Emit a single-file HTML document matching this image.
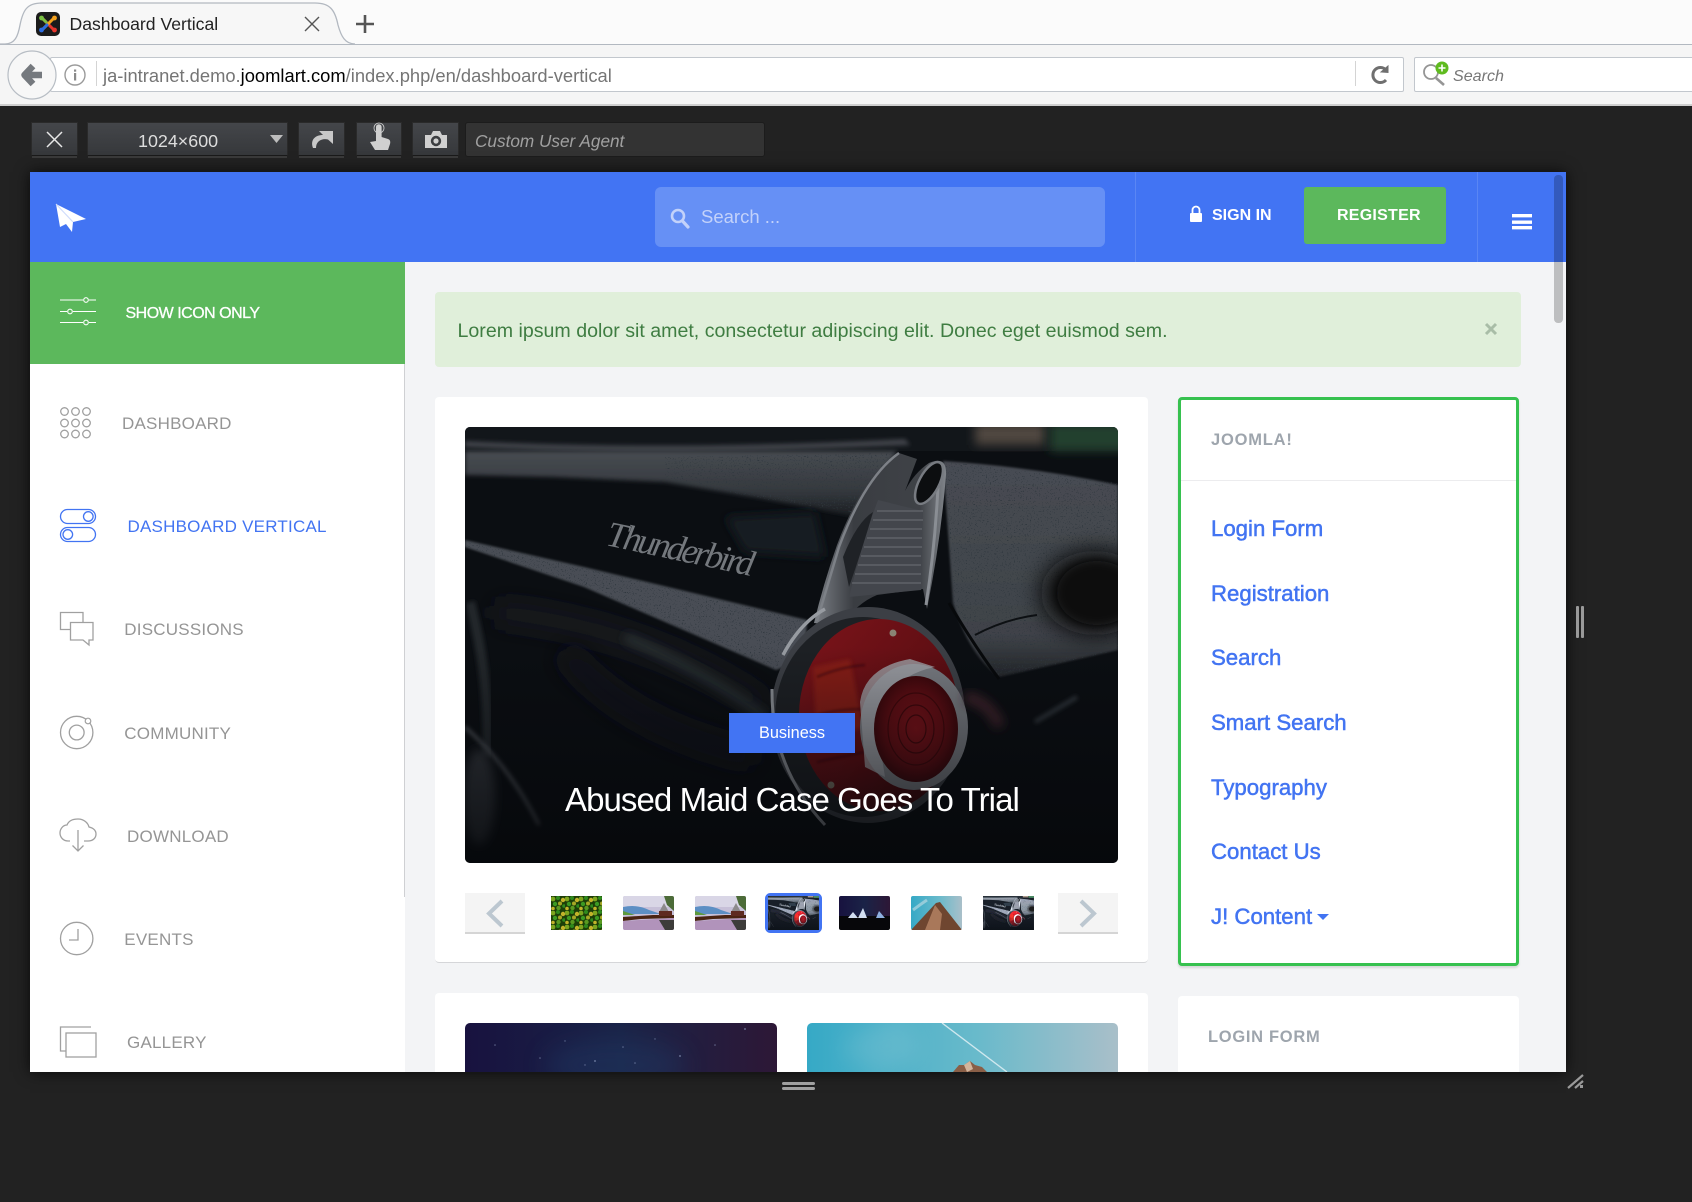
<!DOCTYPE html>
<html lang="en">
<head>
<meta charset="utf-8">
<title>Dashboard Vertical</title>
<style>
html,body{margin:0;padding:0;width:1692px;height:1202px;overflow:hidden;background:#222}
body{font-family:"Liberation Sans",Arial,sans-serif;position:relative}
.b{position:absolute;box-sizing:border-box}
.t{position:absolute;white-space:nowrap;line-height:24px;height:24px}
.nav{font-size:17px;letter-spacing:.22px;color:#959595}
.mi{font-size:22.2px;color:#4274f2;left:1211px;-webkit-text-stroke:.5px #4274f2}
.btn{background:linear-gradient(#44464a,#36383b);border:1px solid #2a2a2a;border-bottom:1px solid #1a1a1a;box-shadow:0 3px 0 -1px #3a3a3a}
svg{position:absolute;left:0;top:0}
</style>
</head>
<body>
<!-- browser chrome -->
<div class="b" style="left:0;top:0;width:1692px;height:45px;background:#fbfbfb;border-bottom:1px solid #b2b8c0"></div>
<div class="b" style="left:0;top:45px;width:1692px;height:61px;background:#f5f5f5;border-bottom:2px solid #cfcfcf"></div>
<div class="b" style="left:50px;top:57px;width:1354px;height:35px;background:#fff;border:1px solid #c2c7cd;border-radius:2px"></div>
<div class="b" style="left:1414px;top:57px;width:290px;height:35px;background:#fff;border:1px solid #c2c7cd;border-radius:2px"></div>

<!-- device toolbar -->
<div class="b btn" style="left:31px;top:122px;width:47px;height:34px"></div>
<div class="b btn" style="left:87px;top:122px;width:201px;height:34px"></div>
<div class="b btn" style="left:298px;top:122px;width:47px;height:34px"></div>
<div class="b btn" style="left:356px;top:122px;width:46px;height:34px"></div>
<div class="b btn" style="left:412px;top:122px;width:47px;height:34px"></div>
<div class="b" style="left:465px;top:122px;width:300px;height:35px;background:#333;border:1px solid #1c1c1c;border-radius:3px"></div>

<!-- responsive frame -->
<div class="b" style="left:30px;top:172px;width:1536px;height:900px;background:#f3f4f6;box-shadow:0 0 14px rgba(0,0,0,.75)"></div>
<div class="b" style="left:30px;top:172px;width:1536px;height:90px;background:#4274f3"></div>
<div class="b" style="left:655px;top:187px;width:450px;height:60px;background:#6690f5;border-radius:6px"></div>
<div class="b" style="left:1135px;top:172px;width:1px;height:90px;background:#5a86f4"></div>
<div class="b" style="left:1477px;top:172px;width:1px;height:90px;background:#5a86f4"></div>
<div class="b" style="left:1304px;top:187px;width:142px;height:57px;background:#5cb85c;border-radius:3px"></div>

<!-- sidebar -->
<div class="b" style="left:30px;top:262px;width:375px;height:810px;background:#fff"></div>
<div class="b" style="left:404px;top:262px;width:1px;height:635px;background:#cfd0d3"></div>
<div class="b" style="left:30px;top:262px;width:375px;height:102px;background:#5cb85c"></div>

<!-- main -->
<div class="b" style="left:435px;top:292px;width:1086px;height:75px;background:#e0efda;border-radius:4px"></div>
<div class="b" style="left:435px;top:397px;width:713px;height:566px;background:#fff;border-radius:4px;border-bottom:1px solid #d5d6d9"></div>
<div class="b" style="left:435px;top:993px;width:713px;height:79px;background:#fff;border-radius:4px 4px 0 0"></div>
<div class="b" style="left:1178px;top:397px;width:341px;height:569px;background:#fff;border:3px solid #36c14f;border-radius:4px;box-shadow:0 2px 2px rgba(0,0,0,.12)"></div>
<div class="b" style="left:1181px;top:480px;width:335px;height:1px;background:#ececee"></div>
<div class="b" style="left:1178px;top:996px;width:341px;height:76px;background:#fff;border-radius:4px 4px 0 0"></div>
<div class="b" style="left:465px;top:893px;width:60px;height:41px;background:#f4f4f4;border-bottom:2px solid #d5d5d5"></div>
<div class="b" style="left:1058px;top:893px;width:60px;height:41px;background:#f4f4f4;border-bottom:2px solid #d5d5d5"></div>

<svg width="1692" height="1202" viewBox="0 0 1692 1202" xmlns="http://www.w3.org/2000/svg">
<defs>
  <filter id="b1" x="-20%" y="-20%" width="140%" height="140%"><feGaussianBlur stdDeviation="1"/></filter>
  <filter id="b2" x="-20%" y="-20%" width="140%" height="140%"><feGaussianBlur stdDeviation="2"/></filter>
  <filter id="b5" x="-30%" y="-30%" width="160%" height="160%"><feGaussianBlur stdDeviation="5"/></filter>
  <filter id="b12" x="-50%" y="-50%" width="200%" height="200%"><feGaussianBlur stdDeviation="12"/></filter>
  <filter id="speck" x="0" y="0" width="100%" height="100%">
    <feTurbulence type="fractalNoise" baseFrequency=".75" numOctaves="2" seed="4"/>
    <feColorMatrix values="0 0 0 0 .03  0 0 0 0 .04  0 0 0 0 .05  14 0 0 0 -8.9"/>
  </filter>
  <clipPath id="grainC"><path d="M0 113 L119 140 L342 193 L311 243 L119 160 L0 120Z M200 30 L432 26 L392 86 L300 72 L200 52Z M478 34 L653 56 V223 L534 250 L488 176Z"/></clipPath>
  <clipPath id="r1"><rect x="0" y="0" width="653" height="436" rx="5"/></clipPath>
  <clipPath id="rt"><rect x="0" y="0" width="51" height="34" rx="2"/></clipPath>
  <radialGradient id="lens" cx=".5" cy=".5" r=".55"><stop offset="0" stop-color="#7a1219"/><stop offset=".6" stop-color="#5f0d13"/><stop offset="1" stop-color="#33060a"/></radialGradient>
  <linearGradient id="lamp" x1="0" y1="0" x2="1" y2="1"><stop offset="0" stop-color="#7d141a"/><stop offset=".55" stop-color="#5e0e13"/><stop offset="1" stop-color="#300609"/></linearGradient>
  <linearGradient id="body" x1="0" y1="0" x2="0" y2="1"><stop offset="0" stop-color="#484c53"/><stop offset=".8" stop-color="#3f4349"/><stop offset="1" stop-color="#24272b"/></linearGradient>
  <linearGradient id="deck" x1="0" y1="0" x2="0" y2="1"><stop offset="0" stop-color="#484c52"/><stop offset=".6" stop-color="#35393e"/><stop offset="1" stop-color="#1a1d21"/></linearGradient>
  <linearGradient id="fin" x1="0" y1="0" x2="1" y2="0"><stop offset="0" stop-color="#7c8086"/><stop offset=".3" stop-color="#3a3d42"/><stop offset=".8" stop-color="#3f4247"/><stop offset="1" stop-color="#80848a"/></linearGradient>
  <linearGradient id="fade" x1="0" y1="0" x2="0" y2="1"><stop offset="0" stop-color="#05070a" stop-opacity="0"/><stop offset="1" stop-color="#05070a" stop-opacity=".78"/></linearGradient>
  <linearGradient id="sky" x1="0" y1="0" x2="1" y2="0"><stop offset="0" stop-color="#36a9c6"/><stop offset=".55" stop-color="#69bacb"/><stop offset="1" stop-color="#a9bfc9"/></linearGradient>
  <linearGradient id="night" x1="0" y1="0" x2="1" y2="0"><stop offset="0" stop-color="#18123f"/><stop offset=".5" stop-color="#1a2347"/><stop offset="1" stop-color="#2d1736"/></linearGradient>
  <pattern id="peas" width="14" height="14" patternUnits="userSpaceOnUse"><rect width="14" height="14" fill="#1d3f08"/><circle cx="2" cy="3" r="2.4" fill="#7ea61f"/><circle cx="7" cy="2" r="2" fill="#2f8a1c"/><circle cx="12" cy="4" r="2.2" fill="#c2b32a"/><circle cx="4" cy="8" r="2.2" fill="#3c9a22"/><circle cx="9" cy="7.5" r="2" fill="#a6a825"/><circle cx="13" cy="10" r="1.8" fill="#2f8a1c"/><circle cx="2" cy="12.5" r="1.8" fill="#c2b32a"/><circle cx="7.5" cy="12" r="2.2" fill="#5a9a20"/></pattern>

  <g id="car">
    <rect width="653" height="436" fill="#0b0e12"/>
    <!-- background at top right -->
    <rect x="0" y="0" width="653" height="24" fill="#12161a"/>
    <rect x="510" y="-4" width="70" height="22" fill="#4f463f" filter="url(#b5)"/>
    <rect x="585" y="-4" width="80" height="28" fill="#20402f" filter="url(#b5)"/>
    <path d="M0 14 Q200 24 440 12 L445 18 Q200 30 0 20Z" fill="#3f4349" filter="url(#b2)"/>
    <!-- top deck -->
    <path d="M0 24 L432 24 L392 90 L300 72 L200 55 L90 50 L0 48Z" fill="url(#deck)" filter="url(#b2)"/>
    <path d="M260 90 L350 85 L360 130 L280 125Z" fill="#141e24" filter="url(#b5)"/>
    <!-- side band -->
    <path d="M0 113 L119 140 L342 193 L340 232 L311 243 L119 160 L0 120Z" fill="#4a4e54" filter="url(#b1)"/>
    <path d="M30 185 Q180 200 300 280" stroke="#1b1e23" stroke-width="18" fill="none" filter="url(#b12)"/>
    <path d="M160 210 Q240 245 300 290" stroke="#2c3035" stroke-width="8" fill="none" filter="url(#b5)"/>
    <path d="M100 225 Q160 300 290 330" stroke="#14171b" stroke-width="22" fill="none" filter="url(#b12)"/>
    <!-- right body -->
    <path d="M478 34 Q570 40 653 58 V223 L534 250 Q505 230 488 176Z" fill="url(#body)" filter="url(#b1)"/>
    <!-- grain -->
    <g clip-path="url(#grainC)"><rect width="653" height="260" filter="url(#speck)"/></g>
    <ellipse cx="630" cy="166" rx="54" ry="42" fill="#0c0e11" filter="url(#b12)"/>
    <ellipse cx="632" cy="166" rx="40" ry="32" fill="#0b0d10" filter="url(#b5)"/>
    <path d="M484 176 Q510 220 534 252" stroke="#07090b" stroke-width="3" fill="none"/>
    <path d="M510 208 Q540 192 572 188" stroke="#0d1013" stroke-width="2" fill="none"/>
    <!-- script badge -->
    <text x="140" y="118" transform="rotate(12 140 118)" font-family="Liberation Serif,serif" font-style="italic" font-size="36" fill="#74787d" textLength="150">Thunderbird</text>
    <!-- fin -->
    <path d="M434 26 Q398 48 372 118 Q358 158 349 196 L376 199 Q392 176 412 168 L458 162 L462 182 Q476 112 481 48 Q482 28 464 36 Q449 46 440 64 L452 32Z" fill="url(#fin)"/>
    <path d="M434 26 Q400 50 374 120 Q362 160 352 194" fill="none" stroke="#7d8187" stroke-width="2.5"/>
    <path d="M413 73 L458 84 L456 163 L384 170 Q398 112 413 73Z" fill="#43464c"/>
    <g stroke="#6d7076" stroke-width="1.1"><path d="M412 84H458M408 93H458M405 102H457M402 111H457M399 120H457M396 129H456M393 138H456M390 147H456M387 156H456"/></g>
    <path d="M378 130 Q392 95 408 85 Q398 120 384 160Z" fill="#1f2226"/>
    <path d="M473 60 Q470 120 461 178" fill="none" stroke="#8a8e94" stroke-width="3"/>
    <ellipse cx="464" cy="56" rx="10" ry="23" transform="rotate(28 464 56)" fill="#0c0e10" stroke="#777b81" stroke-width="2.5"/>
    <!-- lamp -->
    <ellipse cx="403" cy="288" rx="97" ry="108" fill="#3c3f45"/>
    <ellipse cx="398" cy="290" rx="88" ry="100" fill="#1d2024"/>
    <ellipse cx="414" cy="288" rx="80" ry="96" fill="url(#lamp)"/>
    <path d="M348 240 L385 232 L398 300 L352 320Z" fill="#8e2219" opacity=".7" filter="url(#b2)"/>
    <g stroke="#2c0507" stroke-width="2.5" fill="none" opacity=".45" filter="url(#b1)"><path d="M352 250 Q375 240 400 238 M345 290 Q370 282 398 282 M352 335 Q375 330 400 325"/></g>
    <ellipse cx="449" cy="300" rx="54" ry="63" fill="#777a80"/>
    <path d="M395 275 Q400 240 445 232 L470 240 Q420 250 412 300 L420 350 L400 340Z" fill="#9fa1a6" opacity=".8"/>
    <ellipse cx="451" cy="302" rx="42" ry="53" fill="url(#lens)"/>
    <g fill="none" stroke="#3f070b" stroke-width="1.2"><ellipse cx="451" cy="302" rx="10" ry="14"/><ellipse cx="451" cy="302" rx="18" ry="24"/><ellipse cx="451" cy="302" rx="28" ry="36"/></g>
    <circle cx="428" cy="206" r="3.5" fill="#8a8374"/>
    <circle cx="366" cy="358" r="3.5" fill="#7d7568"/>
    <path d="M307 262 Q306 340 360 398" fill="none" stroke="#8b8f95" stroke-width="3"/>
    <path d="M318 228 Q335 196 360 182" fill="none" stroke="#979ba1" stroke-width="3.5"/>
    <!-- lower left wheel arch -->
    <path d="M5 175 Q25 250 22 330" fill="none" stroke="#22252a" stroke-width="10" filter="url(#b2)"/>
    <path d="M0 300 Q45 340 74 398" fill="none" stroke="#55595f" stroke-width="3" filter="url(#b2)"/>
    <ellipse cx="14" cy="370" rx="16" ry="48" fill="#30343a" filter="url(#b5)"/>
    <path d="M500 270 Q525 275 535 300" stroke="#3d2329" stroke-width="12" fill="none" filter="url(#b5)"/>
    <path d="M570 295 L612 270" stroke="#33373c" stroke-width="4" filter="url(#b2)"/>
    <rect y="220" width="653" height="216" fill="url(#fade)"/>
  </g>

  <g id="lake" clip-path="url(#rt)">
    <rect width="51" height="34" fill="#c7c0d8"/>
    <rect width="51" height="11" fill="#d9d6e6"/>
    <path d="M0 11 Q14 8 26 14 L38 18 H0Z" fill="#5c8fc4"/>
    <path d="M0 15 L12 19 H0Z" fill="#5e9a3e"/>
    <path d="M0 21 L30 19 L51 19 V22 L18 23 L0 25Z" fill="#4a2412"/>
    <path d="M0 25 L51 22 V34 H0Z" fill="#b193bb"/>
    <path d="M35 18 L41 7 L47 18Z" fill="#8d8a8c"/>
    <rect x="36" y="15" width="13" height="5" fill="#5e2a20"/>
    <path d="M41 0 H51 V15 L44 9Z" fill="#4c6b38"/>
    <path d="M36 24 H51 V34 H42Z" fill="#3d3c3a"/>
  </g>
  <g id="tents" clip-path="url(#rt)">
    <rect width="51" height="20" fill="url(#night)"/>
    <rect y="20" width="51" height="14" fill="#07070a"/>
    <path d="M9 22 L14 16 L19 22Z M19 22 L24 12 L28 22Z" fill="#d3dff2"/>
    <path d="M37 22 L40 15 L46 22Z" fill="#8fb0e0"/>
  </g>
  <g id="tower" clip-path="url(#rt)">
    <rect width="51" height="34" fill="url(#sky)"/>
    <path d="M0 34 L25 7 L29 6 L51 34Z" fill="#6f4630"/>
    <path d="M24 9 L31 18 L29 34 H14Z" fill="#a9785a"/>
    <path d="M2 14 Q10 8 16 4" stroke="#c7dde5" stroke-width="3" fill="none" opacity=".6"/>
  </g>
</defs>

<!-- ===== browser tab ===== -->
<path d="M0 44 H5 C15 44 18 36 20 25 C23 10 27 3 42 3 H315 C330 3 335 10 338 25 C341 36 345 44 355 44" fill="#f7f7f7" stroke="#b2b8c0" stroke-width="1.3"/>
<rect x="36" y="12" width="24" height="24" rx="5" fill="#1b1b1b"/>
<g stroke-width="3" fill="none" stroke-linecap="round">
  <path d="M42 18 L54 30" stroke="#e8352c"/><path d="M54 18 L42 30" stroke="#f4a21e"/>
  <path d="M42 30 L47 25" stroke="#2c6ce0"/><path d="M42 18 L46 22" stroke="#7ac143"/>
</g>
<circle cx="41.5" cy="18" r="2.4" fill="#7ac143"/><circle cx="54.5" cy="18" r="2.4" fill="#f4a21e"/><circle cx="41.5" cy="30" r="2.4" fill="#2c6ce0"/><circle cx="54.5" cy="30" r="2.4" fill="#e8352c"/>
<path d="M305 17 L319 31 M319 17 L305 31" stroke="#555" stroke-width="1.4"/>
<path d="M365 15 V33 M356 24 H374" stroke="#555" stroke-width="2.6"/>
<!-- back button -->
<circle cx="32" cy="75" r="24" fill="#f7f7f7" stroke="#b7bdc4" stroke-width="1.2"/>
<path d="M33 66 L24.5 75 L33 84 M27 75 H42" fill="none" stroke="#75797e" stroke-width="6.5" stroke-linejoin="round"/>
<circle cx="75" cy="75" r="10" fill="none" stroke="#9a9a9a" stroke-width="1.4"/>
<rect x="74" y="73" width="2.2" height="7.5" fill="#8a8a8a"/><rect x="74" y="69.5" width="2.2" height="2.2" fill="#8a8a8a"/>
<rect x="96" y="61" width="1" height="25" fill="#d4d4d4"/>
<rect x="1355" y="61" width="1" height="25" fill="#d4d4d4"/>
<path d="M1386 70 A7.5 7.5 0 1 0 1386 80" fill="none" stroke="#6f6f6f" stroke-width="3"/>
<path d="M1381 72 L1388 66 V72.5Z" fill="#6f6f6f" stroke="#6f6f6f" stroke-width="1"/>
<circle cx="1431" cy="72" r="7" fill="none" stroke="#959595" stroke-width="1.8"/>
<path d="M1436 78 L1444 85" stroke="#959595" stroke-width="2.6"/>
<circle cx="1442" cy="68" r="6.5" fill="#5fbb1f"/>
<path d="M1442 64.5 V71.5 M1438.5 68 H1445.5" stroke="#fff" stroke-width="1.6"/>

<!-- ===== device toolbar icons ===== -->
<path d="M47 132 L62 147 M62 132 L47 147" stroke="#e8e8e8" stroke-width="1.5"/>
<path d="M270 135 H283 L276.5 143Z" fill="#bdbdbd"/>
<path d="M313 148 C310 140 315 135 323 135 L319 131 H333 V144 L328 139.5 C322 138 316 141 316 148Z" fill="#c8c8c8"/>
<path d="M376 127 a2.8 2.8 0 0 1 5.6 0 V137 L388 139 Q391 140 390 144 L388 150 H375 L370 142 L376 141Z" fill="#d0d0d0"/>
<circle cx="379" cy="128" r="5" fill="none" stroke="#d0d0d0" stroke-width=".8"/>
<path d="M425 135 H431 L433 131 H440 L442 135 H447 V148 H425Z" fill="#d0d0d0"/>
<circle cx="436" cy="141" r="5.2" fill="#3c3e41"/><circle cx="436" cy="141" r="2.6" fill="#d0d0d0"/>

<!-- ===== header ===== -->
<path d="M56 204 L86 219 L73 222 L72 232 L66 224 L60 227Z" fill="#fff"/>
<path d="M56 204 L73 222" stroke="#cfdcfb" stroke-width="1.2"/>
<circle cx="678" cy="216" r="6" fill="none" stroke="#c3d2fa" stroke-width="2.6"/>
<path d="M682.5 221 L688 227" stroke="#c3d2fa" stroke-width="3.2" stroke-linecap="round"/>
<path d="M1192.5 213 V210 a3.5 3.5 0 0 1 7 0 V213" fill="none" stroke="#fff" stroke-width="1.8"/>
<rect x="1190" y="213" width="12" height="9" rx="1" fill="#fff"/>
<path d="M1512 214 h20 v3.4 h-20z M1512 220.5 h20 v3.4 h-20z M1512 226 h20 v3.4 h-20z" fill="#fff"/>
<!-- scrollbar -->
<rect x="1554" y="175" width="9" height="148" rx="4" fill="#000" opacity=".22"/>

<!-- ===== sidebar icons ===== -->
<g fill="none" stroke="#fff" stroke-width="1.1">
  <path d="M60 300 H83 M89 300 H96 M60 311.5 H67 M73 311.5 H96 M60 322.5 H83 M89 322.5 H96"/>
  <circle cx="86" cy="300" r="2.3"/><circle cx="70" cy="311.5" r="2.3"/><circle cx="86" cy="322.5" r="2.3"/>
</g>
<g fill="none" stroke="#a0a0a0" stroke-width="1.3">
  <circle cx="64.5" cy="411.5" r="3.8"/><circle cx="75.5" cy="411.5" r="3.8"/><circle cx="86.5" cy="411.5" r="3.8"/>
  <circle cx="64.5" cy="423" r="3.8"/><circle cx="75.5" cy="423" r="3.8"/><circle cx="86.5" cy="423" r="3.8"/>
  <circle cx="64.5" cy="434" r="3.8"/><circle cx="75.5" cy="434" r="3.8"/><circle cx="86.5" cy="434" r="3.8"/>
  <path d="M83 622 V612.5 H60.5 V629.5 H70.5 M70.5 622.5 H93 V640 H89 V645 L83 640 H70.5Z"/>
  <circle cx="76.7" cy="732.5" r="16.2"/><circle cx="76.7" cy="732.5" r="7.4"/>
  <path d="M70 841 H68 C63 841 60 837 60 833 C60 829 63 825 67 825 C69 820 74 819 78 819 C84 819 88 823 89 827 C93 828 96 830 96 834 C96 838 93 841 88 841 H84"/>
  <path d="M78 830 V851 M72.5 845.5 L78 851 L83.5 845.5"/>
  <circle cx="76.7" cy="938.5" r="16.2"/><path d="M78 929 V940 H69"/>
  <path d="M91 1027 H60.5 V1051 H66"/><rect x="66" y="1033" width="30" height="24"/>
</g>
<circle cx="88" cy="721" r="2.8" fill="#fff" stroke="#a0a0a0" stroke-width="1.2"/>
<g fill="none" stroke="#4274f2" stroke-width="1.3">
  <rect x="60.5" y="509.5" width="35" height="14" rx="7"/><circle cx="88.3" cy="516.5" r="4.8"/>
  <rect x="60.5" y="527.5" width="35" height="14" rx="7"/><circle cx="67.8" cy="534.5" r="4.8"/>
</g>

<!-- alert close -->
<path d="M1486 324 L1496 334 M1496 324 L1486 334" stroke="#a9bda7" stroke-width="3"/>

<!-- ===== hero image ===== -->
<svg x="465" y="427" width="653" height="436" viewBox="0 0 653 436">
  <g clip-path="url(#r1)"><use href="#car"/></g>
</svg>

<!-- ===== slider nav ===== -->
<path d="M502 901 L489 913.5 L502 926" fill="none" stroke="#bcc7d0" stroke-width="4"/>
<path d="M1081 901 L1094 913.5 L1081 926" fill="none" stroke="#bcc7d0" stroke-width="4"/>
<svg x="551" y="896" width="51" height="34" viewBox="0 0 51 34"><rect width="51" height="34" fill="url(#peas)"/></svg>
<svg x="623" y="896" width="51" height="34" viewBox="0 0 51 34"><use href="#lake"/></svg>
<svg x="695" y="896" width="51" height="34" viewBox="0 0 51 34"><use href="#lake"/></svg>
<rect x="766.5" y="894.5" width="54" height="37" rx="4" fill="none" stroke="#4274f3" stroke-width="3"/>
<svg x="768" y="896" width="51" height="34" viewBox="0 0 653 436" style="filter:brightness(2.2)"><use href="#car"/></svg>
<svg x="839" y="896" width="51" height="34" viewBox="0 0 51 34"><use href="#tents"/></svg>
<svg x="911" y="896" width="51" height="34" viewBox="0 0 51 34"><use href="#tower"/></svg>
<svg x="983" y="896" width="51" height="34" viewBox="0 0 653 436" style="filter:brightness(2.2)"><use href="#car"/></svg>

<!-- ===== second row images ===== -->
<svg x="465" y="1023" width="312" height="49" viewBox="0 0 312 49">
  <rect width="312" height="60" rx="5" fill="url(#night)"/>
  <ellipse cx="150" cy="42" rx="70" ry="26" fill="#22406c" opacity=".35" filter="url(#b12)"/>
  <g fill="#8f9cc0" opacity=".6"><circle cx="30" cy="22" r=".8"/><circle cx="75" cy="35" r=".8"/><circle cx="100" cy="18" r=".7"/><circle cx="130" cy="38" r="1"/><circle cx="158" cy="24" r=".8"/><circle cx="190" cy="16" r=".7"/><circle cx="215" cy="33" r="1"/><circle cx="250" cy="22" r=".8"/><circle cx="280" cy="6" r="1"/><circle cx="120" cy="42" r=".7"/><circle cx="170" cy="40" r=".8"/></g>
</svg>
<svg x="807" y="1023" width="311" height="49" viewBox="0 0 311 49">
  <rect width="311" height="60" rx="5" fill="url(#sky)"/>
  <path d="M40 30 Q70 12 100 4 M60 44 Q90 30 110 22" stroke="#9fd0dc" stroke-width="14" fill="none" opacity=".35" filter="url(#b12)"/>
  <path d="M135 0 L200 49" stroke="#cfe8ee" stroke-width="1.4"/>
  <path d="M146 49 L152 42 L157 42 L163 38 L168 42 L175 44 L180 49Z" fill="#8a5f47"/>
  <path d="M157 42 L163 38 L166 46 L160 49Z" fill="#d3b59c"/>
</svg>
</svg>

<!-- window furniture -->
<div class="b" style="left:782px;top:1082px;width:33px;height:3px;background:#a0a0a0;border-radius:2px"></div>
<div class="b" style="left:782px;top:1087px;width:33px;height:3px;background:#a0a0a0;border-radius:2px"></div>
<div class="b" style="left:1576px;top:606px;width:3px;height:32px;background:#999;border-radius:1px"></div>
<div class="b" style="left:1581px;top:606px;width:3px;height:32px;background:#999;border-radius:1px"></div>
<svg width="1692" height="1202" viewBox="0 0 1692 1202" style="pointer-events:none">
  <path d="M1568 1088 L1583 1075 M1575 1088 L1583 1081" stroke="#9a9a9a" stroke-width="2.2"/>
  <rect x="1580" y="1085" width="3" height="3" fill="#9a9a9a"/>
</svg>

<!-- ===== text ===== -->
<div class="t" style="left:69.5px;top:12px;font-size:17.6px;color:#222">Dashboard Vertical</div>
<div class="t" style="left:103px;top:64px;font-size:18.35px;color:#757575">ja-intranet.demo.<span style="color:#000">joomlart.com</span>/index.php/en/dashboard-vertical</div>
<div class="t" style="left:1453px;top:64px;font-size:16.1px;font-style:italic;color:#777">Search</div>

<div class="t" style="left:138px;top:129px;font-size:17.9px;color:#ddd">1024×600</div>
<div class="t" style="left:475px;top:129px;font-size:17.2px;font-style:italic;color:#a0a0a0">Custom User Agent</div>

<div class="t" style="left:701px;top:205px;font-size:18.5px;color:#c3d2fa">Search ...</div>
<div class="t" style="left:1212px;top:204px;font-size:16px;font-weight:bold;color:#fff">SIGN IN</div>
<div class="t" style="left:1337px;top:204px;font-size:16px;font-weight:bold;letter-spacing:.25px;color:#fff">REGISTER</div>

<div class="t" style="left:125.5px;top:301.5px;font-size:16px;letter-spacing:-.5px;color:#fff;-webkit-text-stroke:.3px #fff">SHOW ICON ONLY</div>
<div class="t nav" style="left:122px;top:412px">DASHBOARD</div>
<div class="t nav" style="left:127.5px;top:515px;color:#4274f2">DASHBOARD VERTICAL</div>
<div class="t nav" style="left:124.3px;top:618px">DISCUSSIONS</div>
<div class="t nav" style="left:124.3px;top:722px">COMMUNITY</div>
<div class="t nav" style="left:127px;top:825px">DOWNLOAD</div>
<div class="t nav" style="left:124.3px;top:928px">EVENTS</div>
<div class="t nav" style="left:127px;top:1031px">GALLERY</div>

<div class="t" style="left:457.5px;top:319px;font-size:19.6px;color:#3f7d42">Lorem ipsum dolor sit amet, consectetur adipiscing elit. Donec eget euismod sem.</div>

<div class="b" style="left:729px;top:713px;width:126px;height:40px;background:#4274f3"></div>
<div class="t" style="left:759px;top:720.5px;font-size:16.3px;color:#fff">Business</div>
<div class="t" style="left:565px;top:788px;font-size:33px;line-height:24px;letter-spacing:-.93px;color:#fff">Abused Maid Case Goes To Trial</div>

<div class="t" style="left:1211px;top:428px;font-size:16.5px;font-weight:bold;letter-spacing:.8px;color:#9ea5ad">JOOMLA!</div>
<div class="t mi" style="top:517px">Login Form</div>
<div class="t mi" style="top:582px">Registration</div>
<div class="t mi" style="top:646px">Search</div>
<div class="t mi" style="top:711px">Smart Search</div>
<div class="t mi" style="top:776px">Typography</div>
<div class="t mi" style="top:840px">Contact Us</div>
<div class="t mi" style="top:905px">J! Content</div>
<div class="b" style="left:1317px;top:914px;width:0;height:0;border-left:6px solid transparent;border-right:6px solid transparent;border-top:6px solid #4274f2"></div>
<div class="t" style="left:1208px;top:1024.5px;font-size:16.5px;font-weight:bold;letter-spacing:.7px;color:#9ea5ad">LOGIN FORM</div>
</body>
</html>
